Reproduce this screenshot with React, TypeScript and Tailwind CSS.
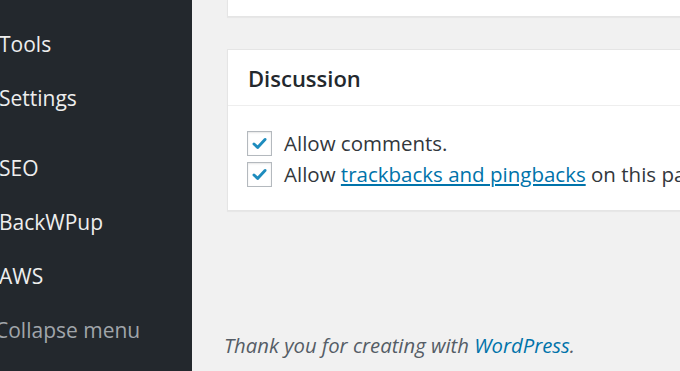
const menuTop = ['Tools', 'Settings'];
const menuBottom = ['SEO', 'BackWPup', 'AWS'];

function Checkbox() {
  return (
    <span className="flex h-[25px] w-[25px] shrink-0 items-center justify-center border border-[#b4b9be] bg-white shadow-[inset_0_1px_2px_rgba(0,0,0,0.1)]">
      <svg width="17" height="17" viewBox="0 0 20 20">
        <path d="M3.5 10.5 L7.8 14.6 L16.5 5.2" fill="none" stroke="#1e8cbe" strokeWidth="3.4" strokeLinecap="round" strokeLinejoin="round" />
      </svg>
    </span>
  );
}

export default function App() {
  return (
    <div className="flex h-[371px] w-[680px] overflow-hidden bg-[#f1f1f1] font-['Open_Sans',sans-serif]">
      <nav className="w-[192px] shrink-0 overflow-hidden bg-[#23282d] pt-[17px] text-[21px] text-[#eeeeee]">
        {menuTop.map((item) => (
          <div key={item} className="-ml-[1px] h-[54px] leading-[54px]">
            {item}
          </div>
        ))}
        <div className="h-[16px]" />
        {menuBottom.map((item) => (
          <div key={item} className="-ml-[1px] h-[54px] leading-[54px]">
            {item}
          </div>
        ))}
        <div className="-ml-[5px] h-[54px] whitespace-nowrap leading-[54px] text-[#a0a5aa]">Collapse menu</div>
      </nav>

      <main className="flex min-w-0 flex-1 flex-col">
        <div className="ml-[35px] h-[17px] w-[700px] shrink-0 border-x border-b border-[#e5e5e5] bg-white shadow-[0_1px_1px_rgba(0,0,0,0.04)]" />

        <section className="ml-[35px] mt-[32px] w-[700px] shrink-0 border border-[#e5e5e5] bg-white shadow-[0_1px_1px_rgba(0,0,0,0.04)]">
          <header className="flex h-[56px] items-center border-b border-[#eeeeee] pl-[20px]">
            <h2 className="text-[22px] font-semibold leading-[30px] text-[#23282d]">Discussion</h2>
          </header>
          <div className="pb-[20px] pl-[19px] pt-[22px] text-[20.5px] leading-[31px] text-[#32373c]">
            <label className="flex h-[31px] items-center gap-[12px]">
              <Checkbox />
              <span>Allow comments.</span>
            </label>
            <label className="flex h-[31px] items-center gap-[12px]">
              <Checkbox />
              <span className="whitespace-nowrap">
                Allow{' '}
                <a href="#" className="text-[#0073aa] underline">
                  trackbacks and pingbacks
                </a>{' '}
                on this page.
              </span>
            </label>
          </div>
        </section>

        <footer className="ml-[32px] mt-[120px] whitespace-nowrap text-[20.3px] italic leading-[28px] text-[#555d66]">
          Thank you for creating with{' '}
          <a href="#" className="text-[#0073aa]">
            WordPress
          </a>
          .
        </footer>
      </main>
    </div>
  );
}
